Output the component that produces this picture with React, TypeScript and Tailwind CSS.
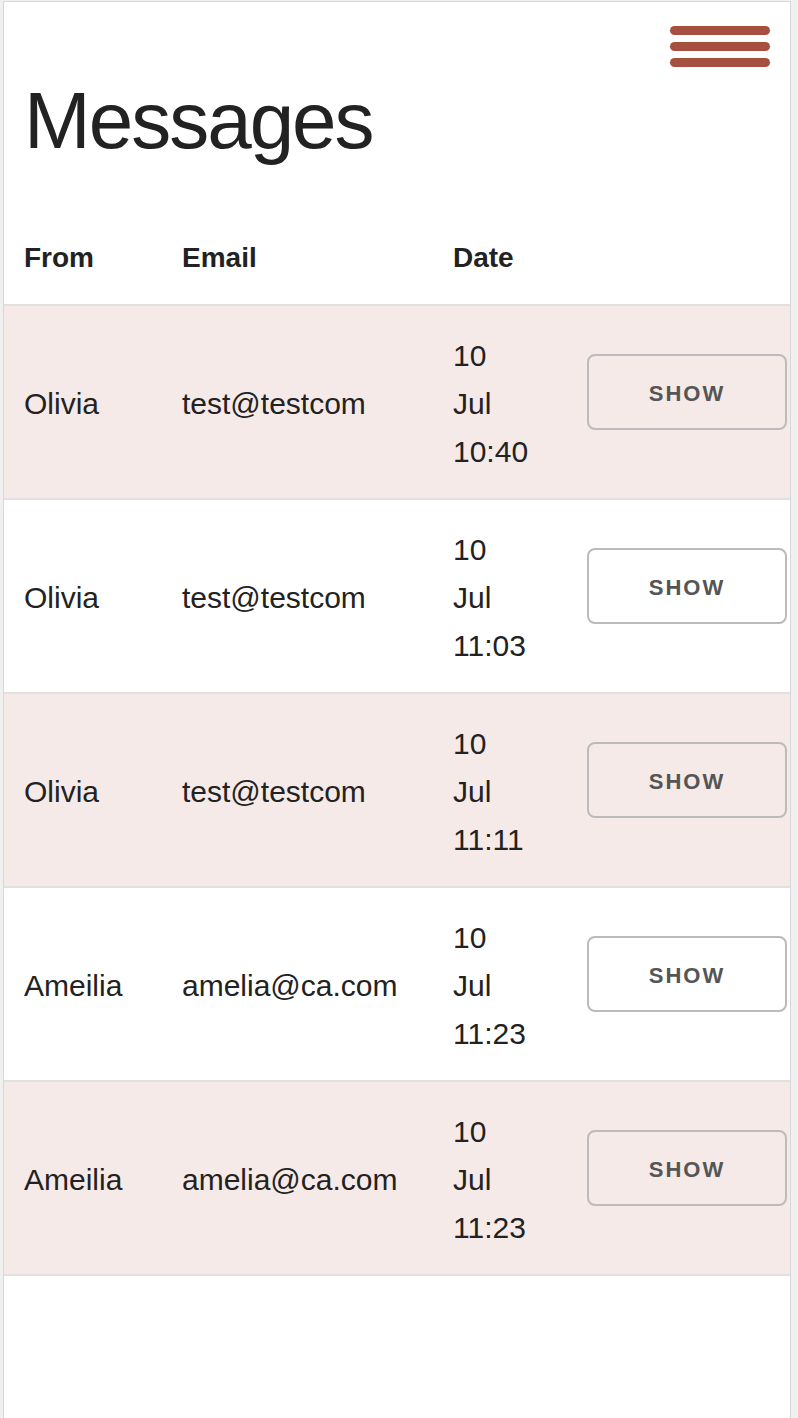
import React from "react";

type Message = {
  from: string;
  email: string;
  day: string;
  month: string;
  time: string;
};

const messages: Message[] = [
  { from: "Olivia", email: "test@testcom", day: "10", month: "Jul", time: "10:40" },
  { from: "Olivia", email: "test@testcom", day: "10", month: "Jul", time: "11:03" },
  { from: "Olivia", email: "test@testcom", day: "10", month: "Jul", time: "11:11" },
  { from: "Ameilia", email: "amelia@ca.com", day: "10", month: "Jul", time: "11:23" },
  { from: "Ameilia", email: "amelia@ca.com", day: "10", month: "Jul", time: "11:23" },
];

const cols = "grid grid-cols-[158px_271px_134px_200px] pl-5 items-center";

const App: React.FC = () => {
  return (
    <div className="min-h-screen bg-[#f0f0f0] pl-[3px] pr-[7px] pt-px font-['Liberation_Sans',Arial,sans-serif] text-[#222]">
      <div className="min-h-[1417px] bg-white border-l border-t border-r border-[#d8d8d8]">
        {/* Top bar */}
        <div className="flex justify-end pt-6 pr-5">
          <button className="flex flex-col gap-[7.5px] w-[100px]" aria-label="menu">
            <span className="block h-[8.5px] w-full rounded-full bg-[#a8503f]" />
            <span className="block h-[8.5px] w-full rounded-full bg-[#a8503f]" />
            <span className="block h-[8.5px] w-full rounded-full bg-[#a8503f]" />
          </button>
        </div>

        <h1 className="mt-[6px] pl-5 text-[80px] leading-[96px] tracking-[-2px] font-normal">
          Messages
        </h1>

        {/* Table */}
        <div className="mt-[39px] text-[30px] leading-[48px]">
          <div className={`${cols} pt-[26px] pb-[22px] border-b-2 border-[#e1e1e1] font-bold text-[28px]`}>
            <div>From</div>
            <div>Email</div>
            <div>Date</div>
            <div />
          </div>

          {messages.map((m, i) => (
            <div
              key={i}
              className={`${cols} pt-[26px] pb-[22px] border-b-2 border-[#e1e1e1] ${i % 2 === 0 ? "bg-[#f5eae8]" : "bg-white"}`}
            >
              <div>{m.from}</div>
              <div>{m.email}</div>
              <div className="flex flex-col">
                <span>{m.day}</span>
                <span>{m.month}</span>
                <span>{m.time}</span>
              </div>
              <div>
                <button className="mb-[24px] h-[76px] w-[200px] rounded-lg border-2 border-[#bbb] bg-transparent pt-[4px] text-[22px] font-bold uppercase tracking-[2px] text-[#555]">
                  Show
                </button>
              </div>
            </div>
          ))}
        </div>
      </div>
    </div>
  );
};

export default App;
